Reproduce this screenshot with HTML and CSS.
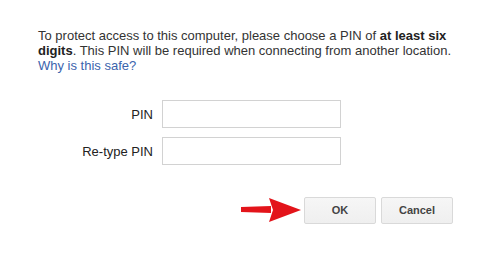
FILE: index.html
```html
<!DOCTYPE html>
<html>
<head>
<meta charset="utf-8">
<link rel="stylesheet" href="styles.css">
</head>
<body>
<div class="dialog">
  <p class="intro">To protect access to this computer, please choose a PIN of <b>at least six digits</b>. This PIN will be required when connecting from another location. <a href="#" class="link">Why is this safe?</a></p>
  <div class="form">
    <label class="label">PIN</label>
    <input class="field" type="password">
    <label class="label">Re-type PIN</label>
    <input class="field" type="password">
  </div>
  <div class="actions">
    <svg class="arrow" width="62" height="28" viewBox="0 0 62 28">
      <polygon points="1,11 31,10 31,17 1,16" fill="#e3141a"/>
      <polygon points="29,2 61,14 29,26 33,14" fill="#e3141a"/>
    </svg>
    <button class="btn">OK</button>
    <button class="btn">Cancel</button>
  </div>
</div>
</body>
</html>
```

FILE: styles.css
```css
html, body {
  margin: 0;
  padding: 0;
  background: #ffffff;
}
.dialog {
  width: 496px;
  height: 261px;
  padding: 28px 43px 0 38px;
  box-sizing: border-box;
  font-family: "Liberation Sans", Arial, sans-serif;
  font-size: 13px;
  color: #333333;
}
.intro {
  margin: 0;
  width: 425px;
  line-height: 15px;
}
.intro b {
  color: #222222;
}
.link {
  color: #3b64ad;
  text-decoration: none;
}
.form {
  margin-top: 27px;
  display: grid;
  grid-template-columns: 115px 179px;
  column-gap: 9px;
  row-gap: 9px;
  align-items: center;
}
.label {
  text-align: right;
  color: #222222;
  font-size: 13px;
}
.field {
  box-sizing: border-box;
  width: 179px;
  height: 28px;
  margin: 0;
  border: 1px solid #d2d2d2;
  background: #fff;
  outline: none;
}
.actions {
  margin-top: 31px;
  display: flex;
  justify-content: flex-end;
  align-items: center;
  gap: 5px;
}
.arrow {
  display: block;
  margin-right: -3px;
}
.btn {
  box-sizing: border-box;
  width: 72px;
  height: 27px;
  border: 1px solid #d9d9d9;
  border-radius: 2px;
  background: linear-gradient(#f6f6f6, #efefef);
  font-family: "Liberation Sans", Arial, sans-serif;
  font-size: 11px;
  font-weight: bold;
  color: #444444;
  padding: 0;
}
```
